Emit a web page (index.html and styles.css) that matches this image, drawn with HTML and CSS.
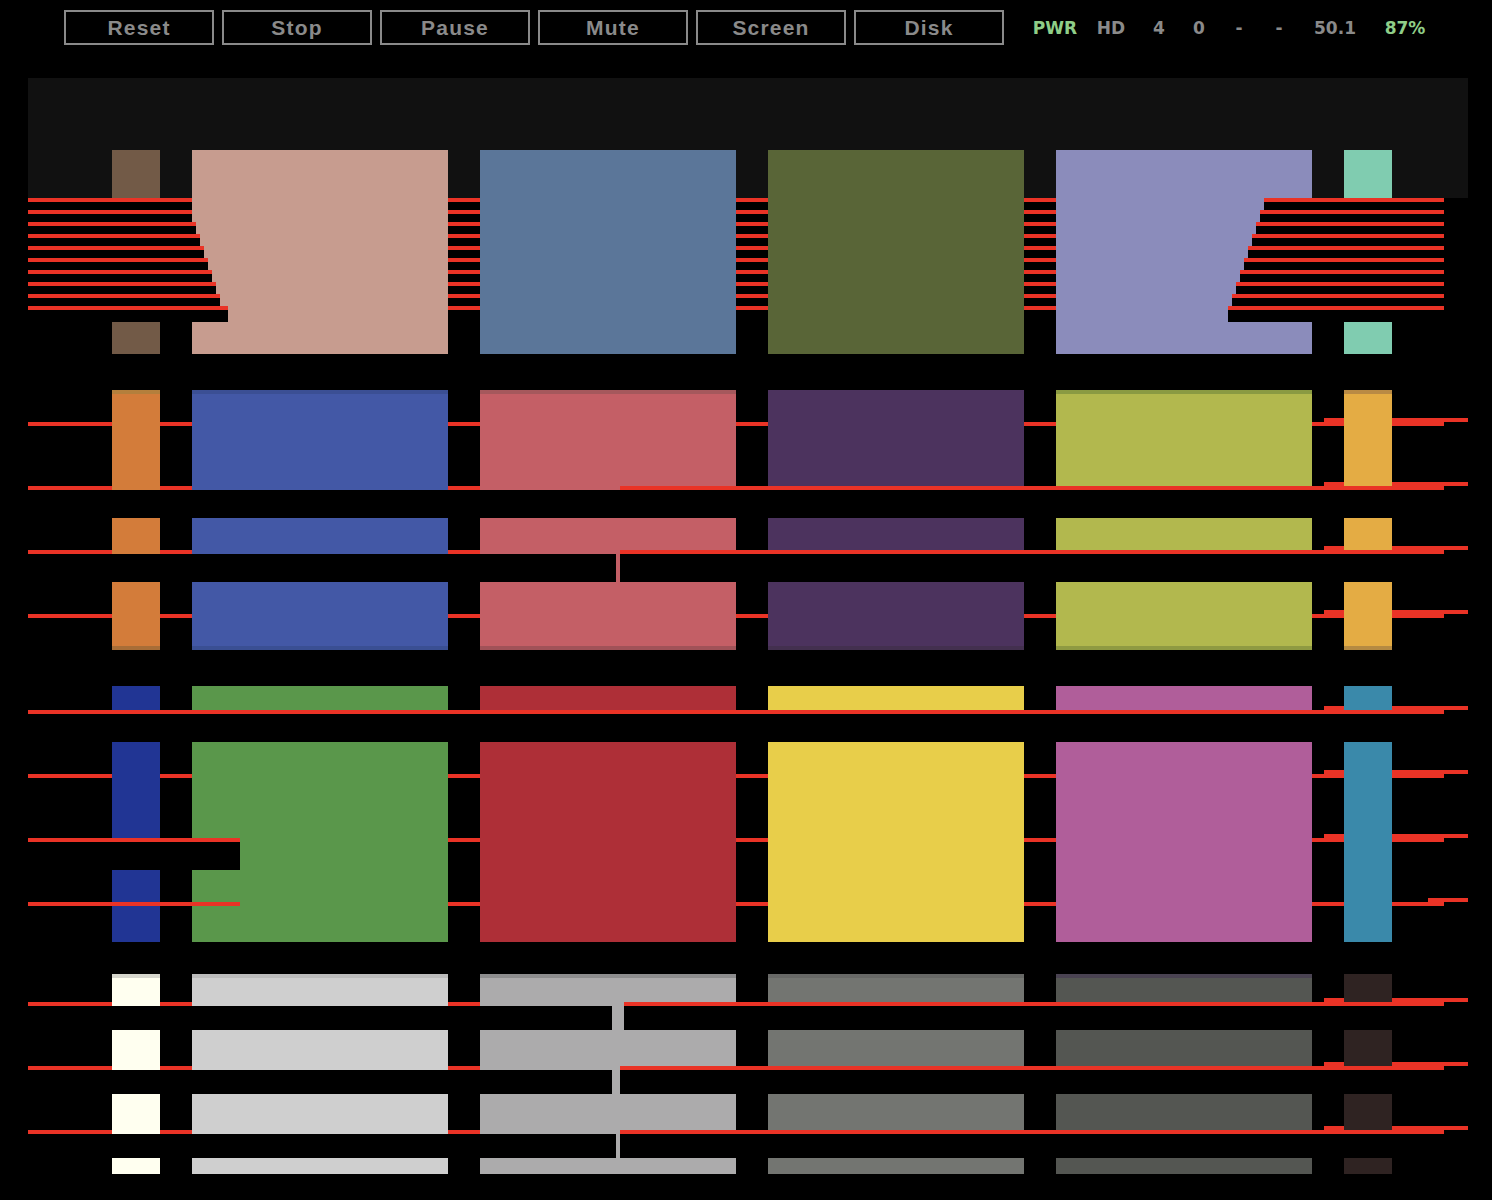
FILE: index.html
```html
<!DOCTYPE html>
<html>
<head>
<meta charset="utf-8">
<title>Emulator</title>
<link rel="stylesheet" href="styles.css">
</head>
<body>
<div class="topbar">
  <div class="buttons">
    <button class="btn">Reset</button>
    <button class="btn">Stop</button>
    <button class="btn">Pause</button>
    <button class="btn">Mute</button>
    <button class="btn">Screen</button>
    <button class="btn">Disk</button>
  </div>
  <div class="status">
    <span class="cell w56 on">PWR</span>
    <span class="cell w56">HD</span>
    <span class="cell w40">4</span>
    <span class="cell w40">0</span>
    <span class="cell w40">-</span>
    <span class="cell w40">-</span>
    <span class="cell w72">50.1</span>
    <span class="cell w68 on">87%</span>
  </div>
</div>
<div class="screen">
<svg class="display" width="1440" height="1122" viewBox="28 78 1440 1122" shape-rendering="crispEdges" xmlns="http://www.w3.org/2000/svg">
  <rect x="28" y="78" width="1440" height="1122" fill="#000"/>
  <rect x="28" y="78" width="1440" height="120" fill="#111"/>

  <!-- red lines under blocks -->
  <g fill="#ea3326">
    <rect x="28" y="198" width="1416" height="4"/>
    <rect x="28" y="210" width="1416" height="4"/>
    <rect x="28" y="222" width="1416" height="4"/>
    <rect x="28" y="234" width="1416" height="4"/>
    <rect x="28" y="246" width="1416" height="4"/>
    <rect x="28" y="258" width="1416" height="4"/>
    <rect x="28" y="270" width="1416" height="4"/>
    <rect x="28" y="282" width="1416" height="4"/>
    <rect x="28" y="294" width="1416" height="4"/>
    <rect x="28" y="306" width="1416" height="4"/>

    <rect x="28" y="422" width="1416" height="4"/>
    <rect x="1324" y="418" width="144" height="4"/>
    <rect x="28" y="486" width="1416" height="4"/>
    <rect x="1324" y="482" width="144" height="4"/>
    <rect x="28" y="550" width="1416" height="4"/>
    <rect x="1324" y="546" width="144" height="4"/>
    <rect x="28" y="614" width="1416" height="4"/>
    <rect x="1324" y="610" width="144" height="4"/>
    <rect x="1324" y="706" width="144" height="4"/>

    <rect x="28" y="774" width="1416" height="4"/>
    <rect x="1324" y="770" width="144" height="4"/>
    <rect x="28" y="838" width="1416" height="4"/>
    <rect x="1324" y="834" width="144" height="4"/>
    <rect x="28" y="902" width="1416" height="4"/>
    <rect x="1428" y="898" width="40" height="4"/>

    <rect x="28" y="1002" width="1416" height="4"/>
    <rect x="1324" y="998" width="144" height="4"/>
    <rect x="28" y="1066" width="1416" height="4"/>
    <rect x="1324" y="1062" width="144" height="4"/>
    <rect x="28" y="1130" width="1416" height="4"/>
    <rect x="1324" y="1126" width="144" height="4"/>
  </g>

  <!-- row 1 -->
  <g fill="#725a47">
    <rect x="112" y="150" width="48" height="48"/>
    <rect x="112" y="322" width="48" height="32"/>
  </g>
  <g fill="#80ccb0">
    <rect x="1344" y="150" width="48" height="48"/>
    <rect x="1344" y="322" width="48" height="32"/>
  </g>
  <g fill="#c79c8f">
    <rect x="192" y="150" width="256" height="48"/>
    <rect x="192" y="198" width="256" height="12"/>
    <rect x="192" y="210" width="256" height="12"/>
    <rect x="196" y="222" width="252" height="12"/>
    <rect x="200" y="234" width="248" height="12"/>
    <rect x="204" y="246" width="244" height="12"/>
    <rect x="208" y="258" width="240" height="12"/>
    <rect x="212" y="270" width="236" height="12"/>
    <rect x="216" y="282" width="232" height="12"/>
    <rect x="220" y="294" width="228" height="12"/>
    <rect x="228" y="306" width="220" height="16"/>
    <rect x="192" y="322" width="256" height="32"/>
  </g>
  <rect x="480" y="150" width="256" height="204" fill="#5b7699"/>
  <rect x="768" y="150" width="256" height="204" fill="#596537"/>
  <g fill="#8b8cbb">
    <rect x="1056" y="150" width="256" height="48"/>
    <rect x="1056" y="198" width="208" height="12"/>
    <rect x="1056" y="210" width="204" height="12"/>
    <rect x="1056" y="222" width="200" height="12"/>
    <rect x="1056" y="234" width="196" height="12"/>
    <rect x="1056" y="246" width="192" height="12"/>
    <rect x="1056" y="258" width="188" height="12"/>
    <rect x="1056" y="270" width="184" height="12"/>
    <rect x="1056" y="282" width="180" height="12"/>
    <rect x="1056" y="294" width="176" height="12"/>
    <rect x="1056" y="306" width="172" height="16"/>
    <rect x="1056" y="322" width="256" height="32"/>
  </g>

  <!-- rows 2-4 -->
  <g fill="#d37c3a">
    <rect x="112" y="390" width="48" height="100"/>
    <rect x="112" y="518" width="48" height="36"/>
    <rect x="112" y="582" width="48" height="68"/>
  </g>
  <g fill="#4358a6">
    <rect x="192" y="390" width="256" height="100"/>
    <rect x="192" y="518" width="256" height="36"/>
    <rect x="192" y="582" width="256" height="68"/>
  </g>
  <g fill="#c45f66">
    <rect x="480" y="390" width="256" height="100"/>
    <rect x="480" y="518" width="256" height="36"/>
    <rect x="616" y="554" width="4" height="28"/>
    <rect x="480" y="582" width="256" height="68"/>
  </g>
  <g fill="#4c335e">
    <rect x="768" y="390" width="256" height="100"/>
    <rect x="768" y="518" width="256" height="36"/>
    <rect x="768" y="582" width="256" height="68"/>
  </g>
  <g fill="#b2b84e">
    <rect x="1056" y="390" width="256" height="100"/>
    <rect x="1056" y="518" width="256" height="36"/>
    <rect x="1056" y="582" width="256" height="68"/>
  </g>
  <g fill="#e4ac44">
    <rect x="1344" y="390" width="48" height="100"/>
    <rect x="1344" y="518" width="48" height="36"/>
    <rect x="1344" y="582" width="48" height="68"/>
  </g>
  <!-- edge tints rows 2 / 4 -->
  <rect x="112" y="390" width="48" height="4" fill="#b47f3c"/>
  <rect x="192" y="390" width="256" height="4" fill="#3b4f94"/>
  <rect x="480" y="390" width="256" height="4" fill="#a5585c"/>
  <rect x="1056" y="390" width="256" height="4" fill="#8a9a42"/>
  <rect x="1344" y="390" width="48" height="4" fill="#b98a44"/>
  <rect x="112" y="646" width="48" height="4" fill="#a86d37"/>
  <rect x="192" y="646" width="256" height="4" fill="#3a4f93"/>
  <rect x="480" y="646" width="256" height="4" fill="#a05258"/>
  <rect x="768" y="646" width="256" height="4" fill="#43304f"/>
  <rect x="1056" y="646" width="256" height="4" fill="#8f9a42"/>
  <rect x="1344" y="646" width="48" height="4" fill="#b58a42"/>

  <!-- rows 5-6 -->
  <g fill="#213594">
    <rect x="112" y="686" width="48" height="24"/>
    <rect x="112" y="742" width="48" height="96"/>
    <rect x="112" y="870" width="48" height="72"/>
  </g>
  <g fill="#5a974b">
    <rect x="192" y="686" width="256" height="24"/>
    <rect x="192" y="742" width="256" height="200"/>
  </g>
  <rect x="192" y="838" width="48" height="32" fill="#000"/>
  <g fill="#ae2f37">
    <rect x="480" y="686" width="256" height="24"/>
    <rect x="480" y="742" width="256" height="200"/>
  </g>
  <g fill="#e8ce4a">
    <rect x="768" y="686" width="256" height="24"/>
    <rect x="768" y="742" width="256" height="200"/>
  </g>
  <g fill="#b05e9a">
    <rect x="1056" y="686" width="256" height="24"/>
    <rect x="1056" y="742" width="256" height="200"/>
  </g>
  <g fill="#3a89aa">
    <rect x="1344" y="686" width="48" height="24"/>
    <rect x="1344" y="742" width="48" height="200"/>
  </g>

  <!-- rows 7-10 -->
  <g fill="#fffff0">
    <rect x="112" y="974" width="48" height="32"/>
    <rect x="112" y="1030" width="48" height="40"/>
    <rect x="112" y="1094" width="48" height="40"/>
    <rect x="112" y="1158" width="48" height="16"/>
  </g>
  <g fill="#cfcfcf">
    <rect x="192" y="974" width="256" height="32"/>
    <rect x="192" y="1030" width="256" height="40"/>
    <rect x="192" y="1094" width="256" height="40"/>
    <rect x="192" y="1158" width="256" height="16"/>
  </g>
  <g fill="#acabac">
    <rect x="480" y="974" width="256" height="32"/>
    <rect x="612" y="1006" width="12" height="24"/>
    <rect x="480" y="1030" width="256" height="40"/>
    <rect x="612" y="1070" width="8" height="24"/>
    <rect x="480" y="1094" width="256" height="40"/>
    <rect x="616" y="1134" width="4" height="24"/>
    <rect x="480" y="1158" width="256" height="16"/>
  </g>
  <g fill="#737571">
    <rect x="768" y="974" width="256" height="32"/>
    <rect x="768" y="1030" width="256" height="40"/>
    <rect x="768" y="1094" width="256" height="40"/>
    <rect x="768" y="1158" width="256" height="16"/>
  </g>
  <g fill="#545652">
    <rect x="1056" y="974" width="256" height="32"/>
    <rect x="1056" y="1030" width="256" height="40"/>
    <rect x="1056" y="1094" width="256" height="40"/>
    <rect x="1056" y="1158" width="256" height="16"/>
  </g>
  <g fill="#2f2322">
    <rect x="1344" y="974" width="48" height="32"/>
    <rect x="1344" y="1030" width="48" height="40"/>
    <rect x="1344" y="1094" width="48" height="40"/>
    <rect x="1344" y="1158" width="48" height="16"/>
  </g>
  <rect x="112" y="974" width="48" height="4" fill="#d6d6cc"/>
  <rect x="192" y="974" width="256" height="4" fill="#bcbcbc"/>
  <rect x="480" y="974" width="256" height="4" fill="#8d8d8e"/>
  <rect x="768" y="974" width="256" height="4" fill="#676866"/>
  <rect x="1056" y="974" width="256" height="4" fill="#4a4352"/>

  <!-- red lines over blocks -->
  <g fill="#ea3326">
    <rect x="620" y="486" width="824" height="4"/>
    <rect x="620" y="550" width="824" height="4"/>
    <rect x="28" y="710" width="1416" height="4"/>
    <rect x="28" y="838" width="212" height="4"/>
    <rect x="28" y="902" width="212" height="4"/>
    <rect x="624" y="1002" width="820" height="4"/>
    <rect x="620" y="1066" width="824" height="4"/>
    <rect x="620" y="1130" width="824" height="4"/>
  </g>
</svg>
</div>
</body>
</html>
```

FILE: styles.css
```css
html, body {
  margin: 0;
  padding: 0;
  background: #000;
}

body {
  width: 1492px;
  height: 1200px;
  overflow: hidden;
  font-family: "Liberation Sans", Arial, sans-serif;
}

.topbar {
  display: flex;
  align-items: center;
  height: 35px;
  padding: 10px 0 0 64px;
}

.buttons {
  display: flex;
  gap: 8px;
}

.btn {
  box-sizing: border-box;
  width: 150px;
  height: 35px;
  margin: 0;
  padding: 1px 0 0;
  background: transparent;
  border: 2px solid #8a8a8a;
  border-radius: 0;
  color: #8a8a8a;
  font-family: "Liberation Sans", Arial, sans-serif;
  font-weight: bold;
  font-size: 21px;
  letter-spacing: 1.2px;
  line-height: 30px;
  text-align: center;
}

.status {
  display: flex;
  margin-left: 23px;
  padding-top: 1px;
  font-family: "DejaVu Sans", Verdana, sans-serif;
  font-weight: bold;
  font-size: 17px;
  color: #8a8a8a;
}

.cell {
  display: block;
  text-align: center;
}

.cell.on {
  color: #8fce88;
}

.w40 { width: 40px; }
.w56 { width: 56px; }
.w68 { width: 68px; }
.w72 { width: 72px; }

.screen {
  margin: 33px 0 0 28px;
  width: 1440px;
  height: 1122px;
}

.display {
  display: block;
}
```
